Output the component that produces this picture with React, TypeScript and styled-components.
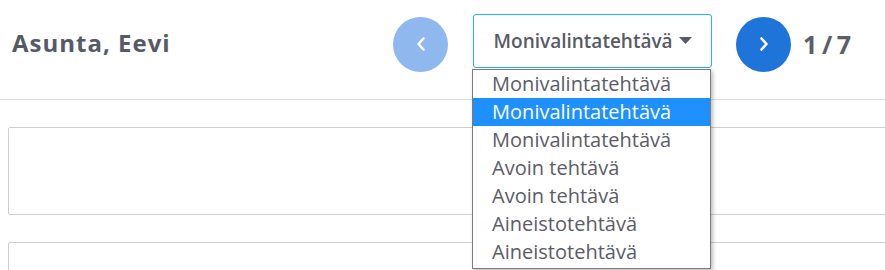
import React from "react";
import styled, { createGlobalStyle } from "styled-components";

const Global = createGlobalStyle`
  html, body { margin: 0; padding: 0; background: #fff; overflow: hidden; }
  body { width: 885px; height: 270px; }
`;

const Page = styled.div`
  width: 885px;
  height: 270px;
  position: relative;
  overflow: hidden;
`;

const Header = styled.header`
  height: 100px;
  border-bottom: 1px solid #dedede;
  display: flex;
  align-items: center;
  padding: 0 34px 12px 12px;
  box-sizing: border-box;
`;

const Title = styled.h1`
  margin: 0;
  font-family: "Open Sans", "Noto Sans", sans-serif;
  font-weight: 700;
  font-size: 24px;
  color: #565a66;
  letter-spacing: 1px;
  margin-top: -2px;
`;

const Nav = styled.div`
  margin-left: auto;
  display: flex;
  align-items: center;
  position: relative;
`;

const Circle = styled.button<{ $light?: boolean }>`
  width: 55px;
  height: 55px;
  border-radius: 50%;
  border: none;
  padding: 0;
  display: flex;
  align-items: center;
  justify-content: center;
  background: ${(p) => (p.$light ? "#8fb8ee" : "#1f74d9")};
  margin-top: 1px;
`;

const SelectWrap = styled.div`
  position: relative;
  margin: 0 24px 0 25px;
`;

const SelectBox = styled.div`
  width: 239px;
  height: 54px;
  box-sizing: border-box;
  border: 1px solid #27b3f2;
  border-radius: 3px;
  display: flex;
  align-items: center;
  justify-content: center;
  gap: 6px;
  font-family: "Open Sans", "Noto Sans", sans-serif;
  font-weight: 600;
  font-size: 19px;
  color: #575b66;
  margin-top: -6px;
`;

const Menu = styled.ul`
  position: absolute;
  left: -1px;
  top: 49px;
  width: 239px;
  margin: 0;
  padding: 0 0 2px;
  list-style: none;
  background: #fff;
  border: 1px solid #7a7a7a;
  box-sizing: border-box;
  box-shadow: 2px 2px 4px rgba(0, 0, 0, 0.25);
  z-index: 5;
`;

const Option = styled.li<{ $active?: boolean }>`
  height: 28px;
  line-height: 28px;
  padding-left: 19px;
  font-family: "Open Sans", sans-serif;
  font-size: 20px;
  color: ${(p) => (p.$active ? "#fff" : "#5c5c66")};
  background: ${(p) => (p.$active ? "#1e90ff" : "transparent")};
  white-space: nowrap;
`;

const Count = styled.span`
  margin-left: 12px;
  font-family: "Open Sans", "Noto Sans", sans-serif;
  font-weight: 700;
  font-size: 25px;
  color: #5a5e69;
  word-spacing: -2px;
  white-space: nowrap;
`;

const Content = styled.main`
  padding: 27px 0 0 8px;
  display: flex;
  flex-direction: column;
  gap: 27px;
`;

const Box = styled.div`
  width: 900px;
  height: 88px;
  border: 1px solid #cfcfcf;
  border-radius: 2px;
  box-sizing: border-box;
`;

const Chevron = ({ dir }: { dir: "left" | "right" }) => (
  <svg width="12" height="16" viewBox="0 0 12 16">
    <path
      d={dir === "left" ? "M8.5 2.5 L3.5 8 L8.5 13.5" : "M3.5 2.5 L8.5 8 L3.5 13.5"}
      fill="none"
      stroke="#fff"
      strokeWidth="2.6"
      strokeLinecap="round"
      strokeLinejoin="round"
    />
  </svg>
);

const Caret = () => (
  <svg width="13" height="8" viewBox="0 0 13 8">
    <path d="M0 0 H13 L6.5 7 Z" fill="#575b66" />
  </svg>
);

const options = [
  "Monivalintatehtävä",
  "Monivalintatehtävä",
  "Monivalintatehtävä",
  "Avoin tehtävä",
  "Avoin tehtävä",
  "Aineistotehtävä",
  "Aineistotehtävä",
];

export default function App() {
  return (
    <Page>
      <Global />
      <Header>
        <Title>Asunta, Eevi</Title>
        <Nav>
          <Circle $light aria-label="previous">
            <Chevron dir="left" />
          </Circle>
          <SelectWrap>
            <SelectBox>
              <span>Monivalintatehtävä</span>
              <Caret />
            </SelectBox>
            <Menu>
              {options.map((o, i) => (
                <Option key={i} $active={i === 1}>
                  {o}
                </Option>
              ))}
            </Menu>
          </SelectWrap>
          <Circle aria-label="next">
            <Chevron dir="right" />
          </Circle>
          <Count>1 / 7</Count>
        </Nav>
      </Header>
      <Content>
        <Box />
        <Box />
      </Content>
    </Page>
  );
}
